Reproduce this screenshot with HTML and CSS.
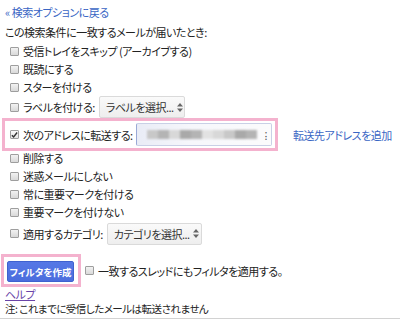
FILE: index.html
```html
<!DOCTYPE html>
<html lang="ja">
<head>
    <meta charset="UTF-8">
    <meta name="viewport" content="width=device-width, initial-scale=1.0">
    <title>フィルタを作成</title>
    <link rel="stylesheet" href="styles.css">
</head>
<body>
    <div class="page">
        <a class="back" href="#">« 検索オプションに戻る</a>
        <p class="intro">この検索条件に一致するメールが届いたとき:</p>

        <div class="opts">
            <label class="row"><span class="cb"></span>受信トレイをスキップ (アーカイブする)</label>
            <label class="row"><span class="cb"></span>既読にする</label>
            <label class="row"><span class="cb"></span>スターを付ける</label>
            <label class="row row-sel"><span class="cb"></span>ラベルを付ける:
                <span class="sel sel-label">ラベルを選択...<svg class="arr" width="6" height="9" viewBox="0 0 6 9"><path d="M3 0L6 3.5H0z M3 9L0 5.5H6z" fill="#666"/></svg></span>
            </label>

            <div class="fwd-line">
                <div class="mark fwd">
                    <span class="cb on"><svg width="8" height="8" viewBox="0 0 8 8"><path d="M1 4.2L3 6.3L7 1.2" fill="none" stroke="#333" stroke-width="1.6"/></svg></span>
                    <span class="fwd-text">次のアドレスに転送する:</span>
                    <span class="addr">
                        <span class="blur">
                            <i class="b1"></i><i class="b2"></i><i class="b3"></i><i class="b4"></i><i class="b2"></i><i class="b5"></i><i class="b3"></i><i class="b1"></i><i class="b4"></i><i class="b2"></i>
                        </span>
                        <span class="dots">⁝</span>
                    </span>
                </div>
                <a class="link" href="#">転送先アドレスを追加</a>
            </div>

            <label class="row"><span class="cb"></span>削除する</label>
            <label class="row"><span class="cb"></span>迷惑メールにしない</label>
            <label class="row"><span class="cb"></span>常に重要マークを付ける</label>
            <label class="row"><span class="cb"></span>重要マークを付けない</label>
            <label class="row row-cat"><span class="cb"></span>適用するカテゴリ:
                <span class="sel sel-cat">カテゴリを選択...<svg class="arr" width="6" height="9" viewBox="0 0 6 9"><path d="M3 0L6 3.5H0z M3 9L0 5.5H6z" fill="#666"/></svg></span>
            </label>
        </div>

        <div class="submit">
            <div class="mark send">
                <button class="btn">フィルタを作成</button>
            </div>
            <label class="row-plain"><span class="cb"></span>一致するスレッドにもフィルタを適用する。</label>
        </div>

        <a class="help" href="#">ヘルプ</a>
        <p class="note">注: これまでに受信したメールは転送されません</p>
    </div>
</body>
</html>
```

FILE: styles.css
```css
* {
    margin: 0;
    padding: 0;
    box-sizing: border-box;
}
body {
    background: #fff;
    color: #222;
    font-family: "Noto Sans CJK JP", "Noto Sans", sans-serif;
    font-size: 11px;
    font-feature-settings: "palt";
    letter-spacing: -0.5px;
    white-space: nowrap;
}
.page {
    padding: 3px 0 2px 5px;
    border-bottom: 1px solid #d2d2d2;
}
a { color: #3a66c4; text-decoration: none; }

.back { display: block; height: 18px; line-height: 18px; }
.intro { height: 20px; line-height: 20px; margin-top: 1px; }

.row {
    display: flex;
    align-items: center;
    height: 18px;
    padding-left: 5px;
}
.row-sel { height: 22px; }
.row-cat { height: 23px; margin-top: 1px; }
.row-plain { display: flex; align-items: center; margin-left: 4px; }

.cb {
    display: inline-flex;
    align-items: center;
    justify-content: center;
    width: 9px;
    height: 9px;
    margin-right: 4px;
    border: 1px solid #9e9e9e;
    border-radius: 1px;
    background: linear-gradient(#f2f2f2, #d9d9d9);
    flex: none;
}
.cb.on { background: linear-gradient(#fafafa, #e6e6e6); }

.sel {
    display: inline-flex;
    align-items: center;
    justify-content: space-between;
    height: 22px;
    margin-left: 4px;
    padding: 0 5px 0 6px;
    border: 1px solid #dadada;
    border-radius: 2px;
    background: linear-gradient(#fafafa, #eeeeee);
    color: #333;
    font-size: 11px;
    flex: none;
}
.sel-label { width: 86px; }
.sel-cat { width: 95px; }
.arr { margin-left: 3px; flex: none; }

.fwd-line {
    display: flex;
    align-items: center;
    margin-left: -3px;
    margin-bottom: -2px;
}
.mark {
    border: 3px solid #f4b2ce;
}
.fwd {
    display: flex;
    align-items: center;
    width: 276px;
    height: 33px;
    padding: 2px 3px 2px 5px;
    flex: none;
}
.fwd-text { flex: none; }
.addr {
    display: flex;
    align-items: center;
    justify-content: space-between;
    flex: 1;
    height: 23px;
    margin-left: 3px;
    padding: 0 4px 0 10px;
    border: 1px solid #c9d0e6;
    border-left-color: #9aa9d6;
    border-radius: 2px;
    background: linear-gradient(90deg, #e9ecf6, #f6f7fb 40%, #fbfbfc);
    overflow: hidden;
}
.blur { display: flex; filter: blur(1.2px); }
.blur i { display: block; width: 11px; height: 9px; }
.b1 { background: #c8c8c8; }
.b2 { background: #b4b4b4; }
.b3 { background: #d8d8d8; }
.b4 { background: #a9a9a9; }
.b5 { background: #e2e2e2; }
.dots { color: #555; font-size: 11px; }
.link { margin-left: 15px; }

.submit {
    display: flex;
    align-items: center;
    margin: 9px 0 0 -4px;
}
.send {
    padding: 4px 4px 2px 3px;
}
.btn {
    display: block;
    width: 67px;
    height: 21px;
    border: 1px solid #3f61cf;
    border-radius: 2px;
    background: linear-gradient(#5678e6, #4b6ddd);
    color: #fff;
    font-family: inherit;
    font-size: 9.5px;
    font-weight: bold;
    font-feature-settings: "palt";
    letter-spacing: 0;
}

.help {
    display: block;
    height: 14px;
    line-height: 14px;
    color: #6a44a8;
    text-decoration: underline;
    width: max-content;
}
.note {
    height: 14px;
    line-height: 14px;
    margin-top: 1px;
    font-size: 10.5px;
}
```
